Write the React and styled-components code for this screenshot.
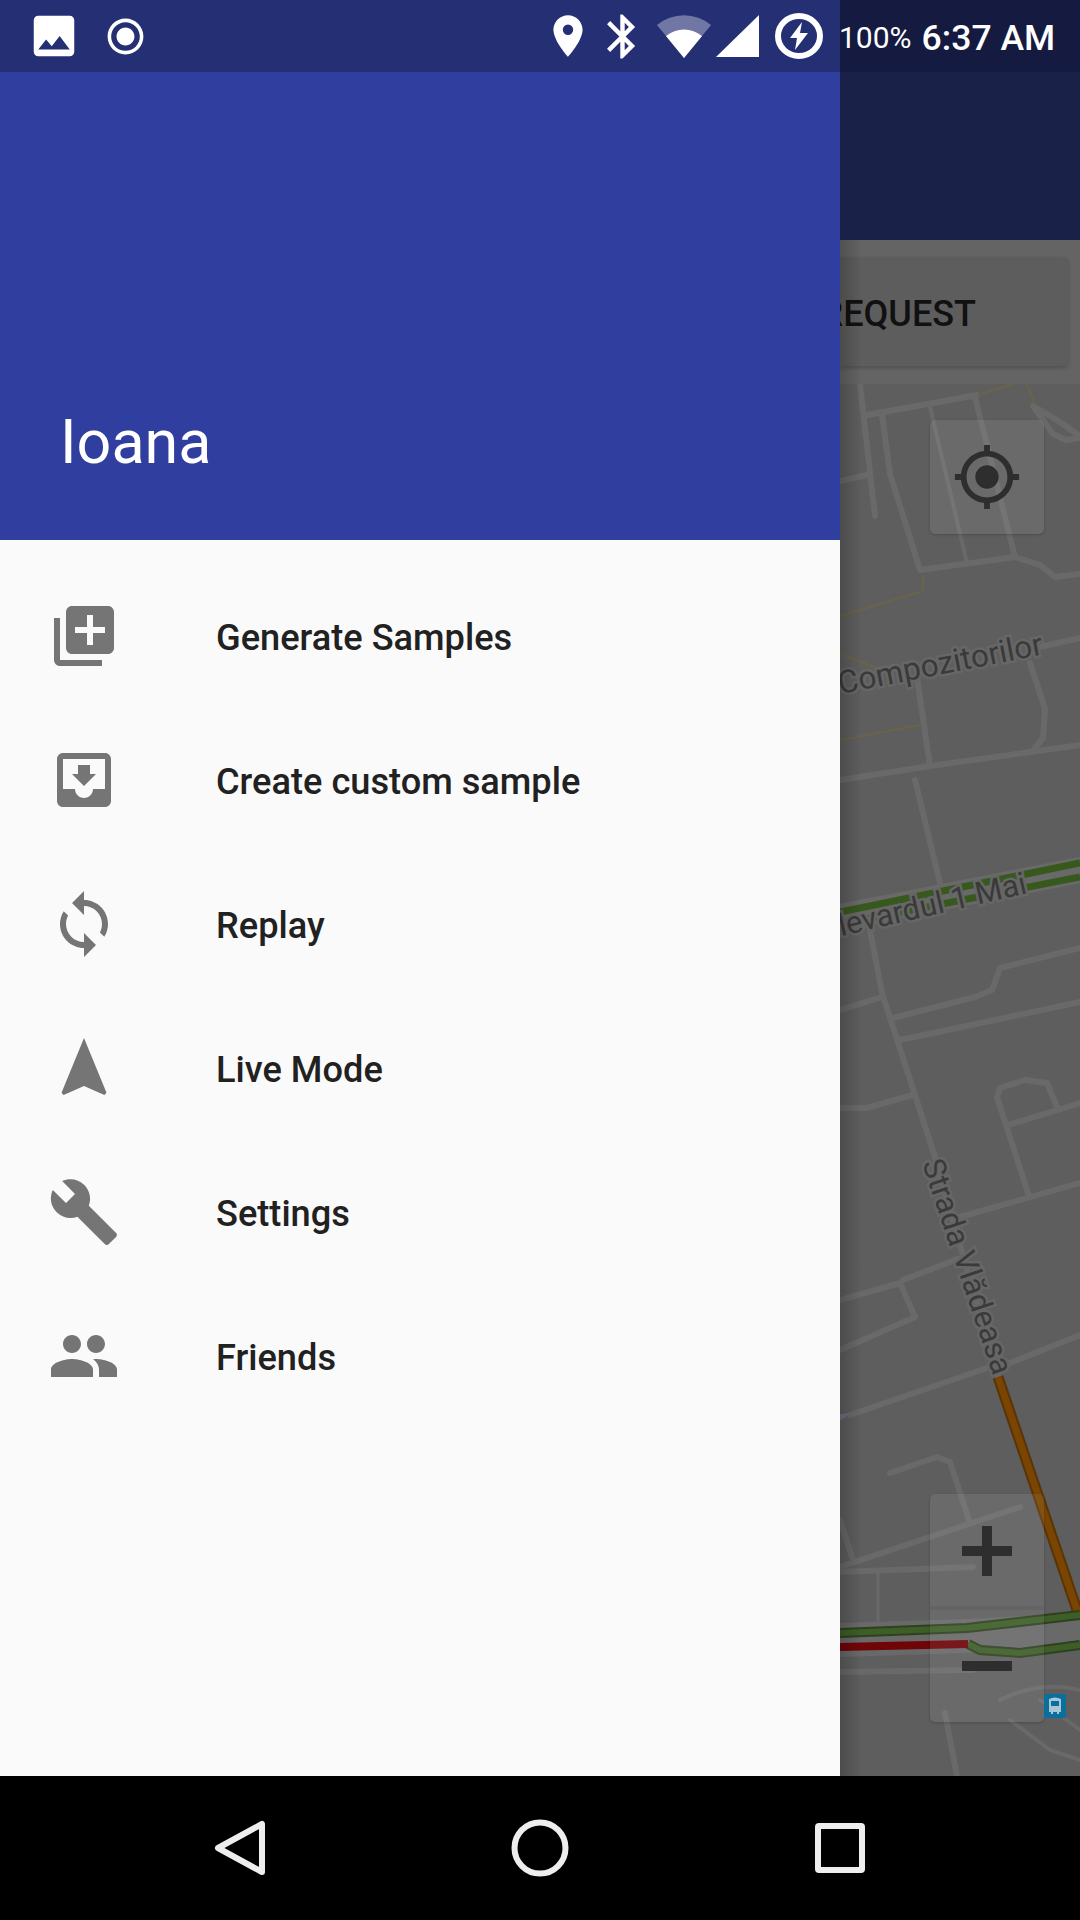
import React from "react";
import styled, { createGlobalStyle } from "styled-components";
import {
  MdLibraryAdd,
  MdMoveToInbox,
  MdSync,
  MdNavigation,
  MdBuild,
  MdPeople,
  MdImage,
  MdRadioButtonChecked,
  MdPlace,
  MdBluetooth,
  MdMyLocation,
} from "react-icons/md";

const GlobalStyle = createGlobalStyle`
  html, body {
    margin: 0;
    padding: 0;
    background: #000;
  }
  body {
    font-family: Roboto, "Liberation Sans", sans-serif;
  }
`;

const Screen = styled.div`
  width: 1080px;
  height: 1920px;
  display: flex;
  flex-direction: column;
  overflow: hidden;
`;

const Main = styled.div`
  height: 1776px;
  display: flex;
`;

const Drawer = styled.aside`
  width: 840px;
  flex-shrink: 0;
  display: flex;
  flex-direction: column;
  background: #fafafa;
`;

const StatusLeft = styled.div`
  height: 72px;
  flex-shrink: 0;
  display: flex;
  align-items: center;
  padding: 0 17px 0 27px;
  background: #242f74;
  color: #fff;
`;

const TraySpacer = styled.div`
  flex: 1;
`;

const Tray = styled.span`
  display: flex;
  align-items: center;
  justify-content: center;
  margin-right: ${(p) => p.$gap || 0}px;
`;

const DrawerHeader = styled.header`
  height: 468px;
  flex-shrink: 0;
  box-sizing: border-box;
  padding: 0 0 64px 60px;
  display: flex;
  align-items: flex-end;
  background: #303f9f;
  color: #fff;
  font-size: 61px;
  line-height: 68px;
`;

const Menu = styled.nav`
  padding-top: 26px;
  display: flex;
  flex-direction: column;
`;

const MenuRow = styled.div`
  height: 144px;
  box-sizing: border-box;
  padding: 0 0 2px 48px;
  display: flex;
  align-items: center;
  gap: 96px;
  color: #212121;
  font-size: 36.2px;
  font-weight: 500;

  svg {
    color: #757575;
    flex-shrink: 0;
    margin-top: -2px;
  }
`;

const Backdrop = styled.div`
  position: relative;
  flex: 1;
  min-width: 0;
  display: flex;
  flex-direction: column;
  overflow: hidden;
  background: #5e5e5e;

  &::after {
    content: "";
    position: absolute;
    top: 240px;
    left: 0;
    bottom: 0;
    width: 22px;
    background: linear-gradient(to right, rgba(0, 0, 0, 0.2), rgba(0, 0, 0, 0));
    pointer-events: none;
  }
`;

const StatusRight = styled.div`
  height: 72px;
  flex-shrink: 0;
  box-sizing: border-box;
  padding-top: 3px;
  display: flex;
  align-items: center;
  background: #141a40;
  color: #fff;
  white-space: nowrap;
`;

const BatteryText = styled.span`
  font-size: 30px;
  margin: 0 10px 0 -1px;
`;

const Clock = styled.span`
  font-size: 35.6px;
  font-weight: 500;
`;

const AppBar = styled.div`
  height: 168px;
  flex-shrink: 0;
  background: #1a2149;
`;

const RequestPanel = styled.div`
  height: 144px;
  flex-shrink: 0;
  box-sizing: border-box;
  padding: 17px 12px 18px 0;
  background: #646464;
`;

const RequestButton = styled.div`
  height: 109px;
  box-sizing: border-box;
  padding: 4px 92px 0 0;
  display: flex;
  align-items: center;
  justify-content: flex-end;
  white-space: nowrap;
  background: #5d5d5d;
  border-radius: 0 5px 5px 0;
  box-shadow: 0 2px 4px rgba(0, 0, 0, 0.2);
  color: #111;
  font-size: 36px;
  font-weight: 500;
`;

const MapArea = styled.div`
  position: relative;
  flex: 1;
  overflow: hidden;
`;

const MapSvg = styled.svg`
  display: block;
  width: 240px;
  height: 1392px;
`;

const Road = styled.path`
  fill: none;
  stroke: #696969;
  stroke-width: ${(p) => p.$w || 6}px;
  stroke-linejoin: round;
  stroke-linecap: round;
`;

const Track = styled.path`
  fill: none;
  stroke: #68634c;
  stroke-width: 2.5px;
`;

const Traffic = styled.path`
  fill: none;
  stroke: ${(p) => p.$color};
  stroke-width: ${(p) => p.$w || 7}px;
`;

const MapLabel = styled.text`
  font-family: Roboto, "Liberation Sans", sans-serif;
  font-size: ${(p) => p.$size || 31}px;
  fill: #3a3a3a;
  stroke: #666;
  stroke-width: 5px;
  paint-order: stroke;
`;

const MapControl = styled.div`
  position: absolute;
  left: 90px;
  top: ${(p) => p.$top}px;
  width: 114px;
  display: flex;
  flex-direction: column;
  background: rgba(255, 255, 255, 0.075);
  border-radius: 5px;
  box-shadow: 0 1px 3px rgba(0, 0, 0, 0.2);
  color: #2e2e2e;
`;

const ControlCell = styled.div`
  height: 114px;
  display: flex;
  align-items: center;
  justify-content: center;
  box-sizing: border-box;

  & + & {
    border-top: 4px solid rgba(0, 0, 0, 0.05);
    margin-top: -2px;
    height: 116px;
  }
`;

const BusStop = styled.svg`
  position: absolute;
  left: 204px;
  top: 1310px;
`;

const NavBar = styled.footer`
  height: 144px;
  display: grid;
  grid-template-columns: repeat(3, 300px);
  padding: 0 90px;
  background: #000;
`;

const NavButton = styled.div`
  display: flex;
  align-items: center;
  justify-content: center;
`;

const menuItems = [
  { label: "Generate Samples", Icon: MdLibraryAdd },
  { label: "Create custom sample", Icon: MdMoveToInbox },
  { label: "Replay", Icon: MdSync },
  { label: "Live Mode", Icon: MdNavigation },
  { label: "Settings", Icon: MdBuild },
  { label: "Friends", Icon: MdPeople },
];

const WifiIcon = () => (
  <svg width="54" height="44" viewBox="0 0 54 44">
    <path d="M0 11 A42 42 0 0 1 54 11 L27 44 Z" fill="#fff" fillOpacity="0.35" />
    <path d="M9 22 A28 28 0 0 1 45 22 L27 44 Z" fill="#fff" />
  </svg>
);

const SignalIcon = () => (
  <svg width="43" height="42" viewBox="0 0 43 42">
    <path d="M43 0 V42 H0 Z" fill="#fff" />
  </svg>
);

const ChargeIcon = () => (
  <svg width="48" height="46" viewBox="0 0 48 46">
    <ellipse cx="24" cy="23" rx="21" ry="20" fill="none" stroke="#fff" strokeWidth="6" />
    <path d="M27 9 L15 25 H22 L20 37 L33 20 H25 Z" fill="#fff" />
  </svg>
);

const MapDrawing = () => (
  <MapSvg viewBox="840 384 240 1392">
    <Road d="M860 384 L875 516" />
    <Road d="M867 415 L977 395" />
    <Road d="M882 415 L890 474 L920 570 L1015 557 L1040 565 L1055 577 L1080 574" />
    <Road d="M930 407 L967 563" $w={4} />
    <Road d="M975 397 L1015 557" />
    <Road d="M840 481 L867 475" />
    <Road d="M1080 436 L1057 420 L1033 406 L1053 434 L1066 440 L1080 438" />
    <Road d="M917 677 L930 766" />
    <Road d="M1030 663 L1045 709 L1043 738 L1032 752" />
    <Road d="M1040 647 L1080 638" />
    <Road d="M840 780 L930 766 L1080 745" />
    <Road d="M915 780 L940 883" />
    <Road d="M870 930 L882 993 L935 1157 L998 1377" />
    <Road d="M840 1010 L882 997" />
    <Road d="M893 1018 L975 997 L992 990 L1000 968 L1080 948" />
    <Road d="M900 1040 L1080 1002" />
    <Road d="M840 1108 L867 1108 L912 1095" />
    <Road d="M1028 1193 L997 1097 L1000 1088 L1025 1080 L1047 1083 L1057 1107" />
    <Road d="M1008 1125 L1080 1103" />
    <Road d="M960 1217 L1080 1183" />
    <Road d="M903 1280 L963 1257" />
    <Road d="M840 1300 L900 1283 L915 1317 L840 1350" />
    <Road d="M1010 1363 L1080 1335" />
    <Road d="M850 1415 L990 1367" />
    <Road d="M890 1473 L937 1457 L950 1462 L970 1523" />
    <Road d="M840 1567 L1020 1507" />
    <Road d="M840 1520 L852 1557" />
    <Road d="M840 1572 L973 1567" />
    <Road d="M878 1573 L878 1625" $w={3} />
    <Road d="M840 1672 L973 1670" />
    <Road d="M945 1713 L957 1776" />
    <Road d="M1000 1700 Q1040 1680 1080 1690" $w={4} />
    <Road d="M1010 1720 L1050 1750 L1080 1760" $w={4} />
    <Road d="M1040 1700 L1080 1730" $w={4} />

    <Track d="M978 395 L1013 384" />
    <Track d="M1027 384 L1035 404" />
    <Track d="M923 574 L923 591 L840 616" />
    <Track d="M840 654 L877 668" />
    <Track d="M840 740 L920 725" />

    <Road d="M840 917 L1080 870" $w={26} />
    <Traffic d="M840 912 L1080 863" $color="#38591d" />
    <Traffic d="M840 924 L1080 877" $color="#38591d" />

    <Road d="M840 1640 L967 1636 L1080 1630" $w={34} />
    <Traffic d="M998 1377 L1078 1613" $color="#5a3408" $w={11} />
    <Traffic d="M998 1377 L1078 1613" $color="#7a4500" />
    <Traffic d="M840 1633 L967 1628 L1080 1615" $color="#2f4020" $w={10} />
    <Traffic d="M840 1633 L967 1628 L1080 1615" $color="#3d5f27" $w={6} />
    <Traffic d="M968 1644 L980 1650 L1020 1653 L1080 1645" $color="#2f4020" $w={10} />
    <Traffic d="M968 1644 L980 1650 L1020 1653 L1080 1645" $color="#3d5f27" $w={6} />
    <Traffic d="M840 1647 L968 1644" $color="#700508" $w={8} />

    <path d="M840 1414 L850 1413 L842 1420 L840 1420 Z" fill="#70707e" />

    <MapLabel x="840" y="694" $size={31.6} transform="rotate(-11 840 694)">
      Compozitorilor
    </MapLabel>
    <MapLabel x="1028" y="893" textAnchor="end" transform="rotate(-13 1028 893)">
      Bulevardul 1 Mai
    </MapLabel>
    <MapLabel x="922" y="1163" transform="rotate(71.5 922 1163)">
      Strada Vlădeasa
    </MapLabel>
  </MapSvg>
);

export default function App() {
  return (
    <Screen>
      <GlobalStyle />
      <Main>
        <Drawer>
          <StatusLeft>
            <Tray $gap={23}>
              <MdImage size={54} />
            </Tray>
            <Tray>
              <MdRadioButtonChecked size={43} />
            </Tray>
            <TraySpacer />
            <Tray $gap={3}>
              <MdPlace size={50} />
            </Tray>
            <Tray $gap={8}>
              <MdBluetooth size={53} />
            </Tray>
            <Tray $gap={5}>
              <WifiIcon />
            </Tray>
            <Tray $gap={16}>
              <SignalIcon />
            </Tray>
            <Tray>
              <ChargeIcon />
            </Tray>
          </StatusLeft>
          <DrawerHeader>Ioana</DrawerHeader>
          <Menu>
            {menuItems.map(({ label, Icon }) => (
              <MenuRow key={label}>
                <Icon size={72} />
                {label}
              </MenuRow>
            ))}
          </Menu>
        </Drawer>
        <Backdrop>
          <StatusRight>
            <BatteryText>100%</BatteryText>
            <Clock>6:37 AM</Clock>
          </StatusRight>
          <AppBar />
          <RequestPanel>
            <RequestButton>REQUEST</RequestButton>
          </RequestPanel>
          <MapArea>
            <MapDrawing />
            <MapControl $top={36}>
              <ControlCell>
                <MdMyLocation size={70} />
              </ControlCell>
            </MapControl>
            <MapControl $top={1110}>
              <ControlCell>
                <svg width="50" height="50" viewBox="0 0 50 50">
                  <path d="M20 0 H30 V20 H50 V30 H30 V50 H20 V30 H0 V20 H20 Z" fill="currentColor" />
                </svg>
              </ControlCell>
              <ControlCell>
                <svg width="50" height="10" viewBox="0 0 50 10">
                  <rect width="50" height="10" fill="currentColor" />
                </svg>
              </ControlCell>
            </MapControl>
            <BusStop width="22" height="24" viewBox="0 0 22 24">
              <rect width="22" height="24" rx="2" fill="#0a6f9d" />
              <path d="M5 5 Q11 2 17 5 V18 H15 V20 H13 V18 H9 V20 H7 V18 H5 Z M7 7 V12 H15 V7 Z" fill="#a9c6d6" />
            </BusStop>
          </MapArea>
        </Backdrop>
      </Main>
      <NavBar>
        <NavButton>
          <svg width="54" height="60" viewBox="0 0 54 60">
            <path d="M49 6 V54 L5 30 Z" fill="none" stroke="#eee" strokeWidth="6" strokeLinejoin="round" />
          </svg>
        </NavButton>
        <NavButton>
          <svg width="60" height="60" viewBox="0 0 60 60">
            <circle cx="30" cy="30" r="25.5" fill="none" stroke="#eee" strokeWidth="6" />
          </svg>
        </NavButton>
        <NavButton>
          <svg width="50" height="50" viewBox="0 0 50 50">
            <rect x="3" y="3" width="44" height="44" rx="1" fill="none" stroke="#eee" strokeWidth="6" />
          </svg>
        </NavButton>
      </NavBar>
    </Screen>
  );
}
